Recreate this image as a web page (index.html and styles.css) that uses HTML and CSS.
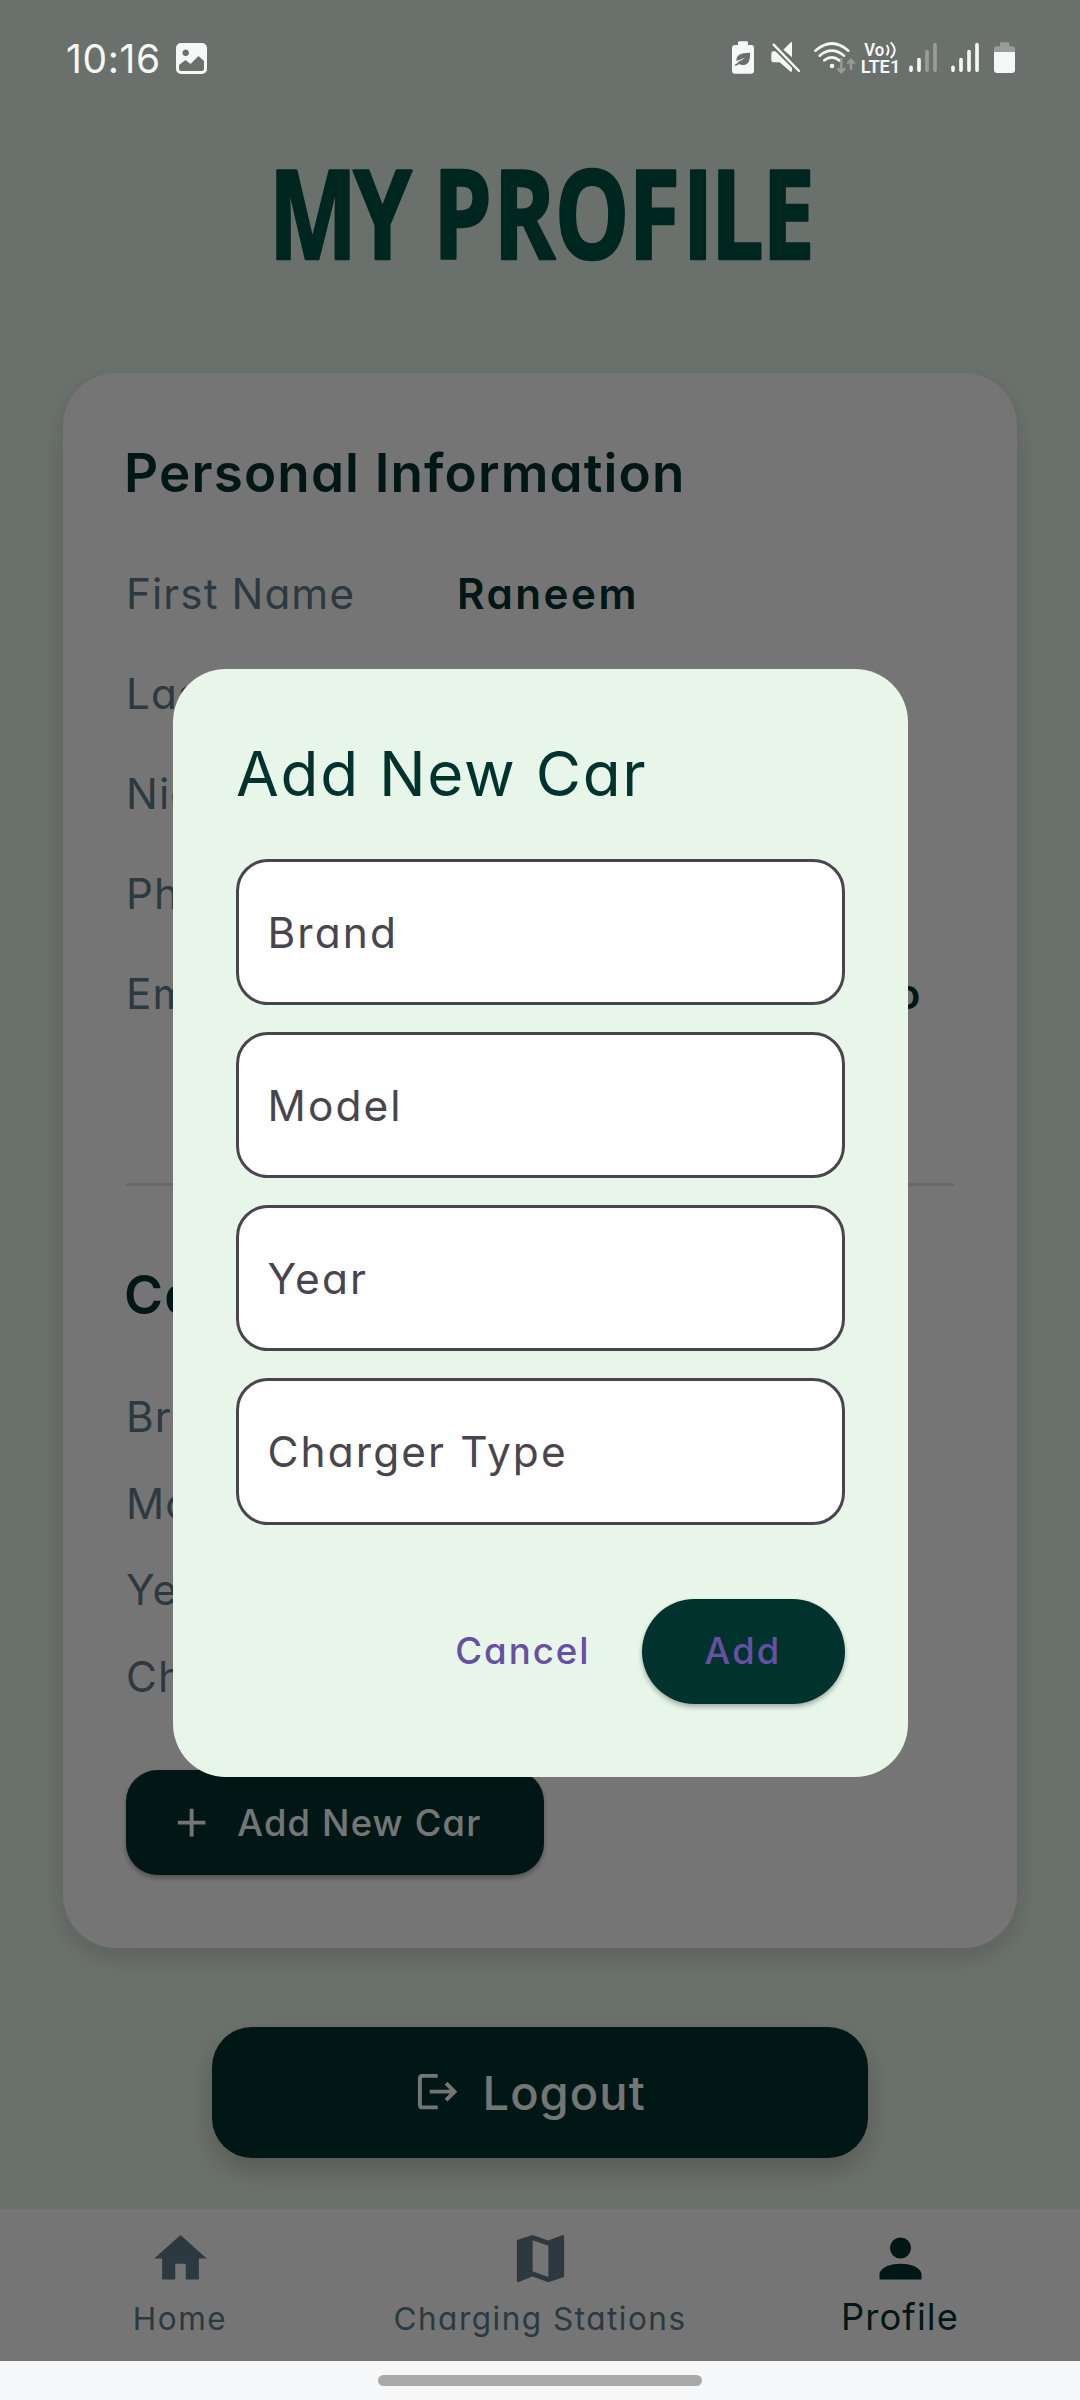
FILE: index.html
```html
<!DOCTYPE html>
<html lang="en">
<head>
<meta charset="utf-8">
<title>My Profile</title>
<link rel="stylesheet" href="styles.css">
</head>
<body>
<div class="screen">
  <div class="app">
    <header class="page-header">
      <svg class="page-title" width="1080" height="150" viewBox="0 0 1080 150">
        <text class="page-title-text" transform="scale(.76 1)" y="109" x="412 503.500 540 608.500 690 779 861 918.500 970 1037.500">MY PROFILE</text>
      </svg>
    </header>

    <main class="card">
      <h2 class="section-title">Personal Information</h2>
      <div class="info-row"><span class="label">First Name</span><span class="value">Raneem</span></div>
      <div class="info-row"><span class="label">Last Name</span></div>
      <div class="info-row"><span class="label">Nickname</span></div>
      <div class="info-row"><span class="label">Phone</span></div>
      <div class="info-row"><span class="label">Email</span><span class="value value-end">raneem@gmail.co</span></div>
      <hr class="divider">
      <h2 class="section-title">Car Information</h2>
      <div class="car-rows">
        <div class="car-row label">Brand</div>
        <div class="car-row label">Model</div>
        <div class="car-row label">Year</div>
        <div class="car-row label">Charger</div>
      </div>
      <button class="btn btn-add-car">
        <svg width="47.25" height="47.25" viewBox="0 0 24 24"><path fill="#fff" d="M19 13h-6v6h-2v-6H5v-2h6V5h2v6h6z"/></svg>
        Add New Car
      </button>
    </main>

    <button class="btn btn-logout">
      <svg width="47.25" height="47.25" viewBox="0 0 24 24"><path fill="#fff" d="M17 7l-1.41 1.41L18.17 11H8v2h10.17l-2.58 2.58L17 17l5-5zM4 5h8V3H4c-1.1 0-2 .9-2 2v14c0 1.1.9 2 2 2h8v-2H4z"/></svg>
      Logout
    </button>

    <nav class="tabs">
      <div class="tab">
        <svg width="63" height="63" viewBox="0 0 24 24"><path fill="currentColor" d="M10 20v-6h4v6h5v-8h3L12 3 2 12h3v8z"/></svg>
        <span>Home</span>
      </div>
      <div class="tab">
        <svg width="63" height="63" viewBox="0 0 24 24"><path fill="currentColor" fill-rule="evenodd" d="M20.5 3l-.16.03L15 5.1 9 3 3.36 4.9a.5.5 0 0 0-.36.48V20.5a.5.5 0 0 0 .66.47L9 18.9l6 2.1 5.64-1.9a.5.5 0 0 0 .36-.48V3.5a.5.5 0 0 0-.5-.5zM15 19l-6-2.11V5l6 2.11z"/></svg>
        <span>Charging Stations</span>
      </div>
      <div class="tab tab-active">
        <svg width="63" height="63" viewBox="0 0 24 24"><circle cx="12" cy="8" r="4" fill="currentColor"/><path fill="currentColor" d="M4 20v-2c0-2.21 3.58-4 8-4s8 1.79 8 4v2z"/></svg>
        <span>Profile</span>
      </div>
    </nav>
  </div>

  <div class="scrim"></div>

  <div class="status-bar">
    <div class="status-left">
      <span class="clock">10:16</span>
      <svg width="31" height="31" viewBox="0 0 31 31"><path fill="#f5f8f6" fill-rule="evenodd" d="M5 0h21a5 5 0 0 1 5 5v21a5 5 0 0 1-5 5H5a5 5 0 0 1-5-5V5a5 5 0 0 1 5-5zM9.700 6.500a3.300 3.300 0 1 0 .01 0zM3 22v3.500A2.500 2.500 0 0 0 5.500 28h20a2.500 2.500 0 0 0 2.500-2.500V18l-5.500-5-8 8-5-4z"/></svg>
    </div>
    <svg class="status-icons" width="380" height="80" viewBox="0 0 1140 240">
      <path fill="#f5f8f6" d="M118 64h22q4 0 4 4v7h9q9 0 9 9v68q0 9-9 9h-48q-9 0-9-9V84q0-9 9-9h9v-7q0-4 4-4z"/>
      <path fill="#6a706b" d="M150 98c1 22-4 37-21 37-5 0-8-1-11-3l-11 6-3-4c6-2 10-6 13-10 6-2 12-5 17-11-9 5-17 7-25 9 0-16 10-24 41-24z"/>
      <g fill="#f5f8f6">
        <path d="M276 68v44l-26-23 20-20q6-5 6-1zM214 100q0-6 6-6h14l42 42v16q0 6-6 2l-31-27h-19q-6 0-6-6z"/>
      </g>
      <path d="M218 74l80 80" stroke="#6a706b" stroke-width="16"/>
      <path d="M221 74l76 79" stroke="#f5f8f6" stroke-width="7" stroke-linecap="round"/>
      <g fill="none" stroke="#f5f8f6" stroke-width="8" stroke-linecap="round">
        <path d="M346 92q50-43 99 0M359 107q36-30 73 0M373 121q22-18 45 0"/>
      </g>
      <circle cx="396" cy="138" r="7" fill="#f5f8f6"/>
      <path d="M424 114v42M413 145l11 12 11-12M453 149v-29M442 131l11-12 11 12" fill="none" stroke="#989d99" stroke-width="7"/>
      <g fill="#f5f8f6" class="volte">
        <text x="493" y="107" font-size="54" textLength="60" lengthAdjust="spacingAndGlyphs">Vo</text>
        <text x="482" y="159" font-size="54" textLength="119" lengthAdjust="spacingAndGlyphs">LTE1</text>
      </g>
      <path d="M560 75q11 15 0 31M572 67q24 24 0 47" fill="none" stroke="#f5f8f6" stroke-width="6"/>
      <g stroke-width="11" stroke-linecap="round" stroke="#f5f8f6">
        <path d="M633 142v9M657 119v32M759 142v9M783 119v32M807 95v56M831 74v77"/>
        <path stroke="#989d99" d="M681 95v56M705 74v77"/>
      </g>
      <path fill="#989d99" d="M904 67h20q4 0 4 4v8h10q7 0 7 7v10h-63V86q0-7 7-7h11v-8q0-4 4-4z"/>
      <path fill="#f5f8f6" d="M882 96h63v54q0 9-9 9h-45q-9 0-9-9z"/>
    </svg>
  </div>

  <section class="dialog">
    <h1 class="dialog-title">Add New Car</h1>
    <div class="fields">
      <div class="field">Brand</div>
      <div class="field">Model</div>
      <div class="field">Year</div>
      <div class="field">Charger Type</div>
    </div>
    <div class="actions">
      <span class="action-cancel">Cancel</span>
      <button class="btn action-add">Add</button>
    </div>
  </section>

  <div class="system-bar"><div class="handle"></div></div>
</div>
</body>
</html>
```
FILE: styles.css
```css
* { box-sizing: border-box; }
body { margin: 0; }

.screen {
  position: relative;
  width: 1080px;
  height: 2400px;
  overflow: hidden;
  display: flex;
  flex-direction: column;
  background: #e8f5e9;
  font-family: Inter, "Open Sans", sans-serif;
  font-feature-settings: "cv11";
  white-space: nowrap;
}
.screen svg { display: block; flex: none; }

.app { height: 2361px; display: flex; flex-direction: column; align-items: center; }

.page-header { height: 373px; padding-top: 150px; }
.page-title-text {
  font: 700 123.5px "Open Sans", sans-serif;
  text-anchor: middle;
  fill: #005346;
  stroke: #005346;
  stroke-width: 2.5px;
  stroke-linejoin: round;
}

.card {
  width: 954px;
  height: 1574.5px;
  padding: 60px 63px 0;
  border-radius: 53px;
  background: #fff;
  box-shadow: 0 10px 26px rgba(0, 0, 0, .14);
}
.section-title {
  margin: 0;
  height: 80px;
  line-height: 80px;
  font-size: 53px;
  font-weight: 560;
  letter-spacing: 1.15px;
  color: #00332e;
  margin-left: -2px;
}
.section-title + .info-row { margin-top: 30px; }
.info-row { display: flex; align-items: center; height: 100px; }
.label { font-size: 42.2px; letter-spacing: 1.1px; color: #607d8b; }
.info-row .label { width: 331px; }
.value { font-size: 42.2px; font-weight: 560; letter-spacing: 2.5px; color: #00332e; }
.value-end { width: 466px; text-align: right; }
.divider { height: 3px; margin: 140px 0 69px; border: 0; background: #e3e3e3; }
.car-rows { margin-top: 39px; }
.car-row { height: 86.6px; line-height: 86.6px; }

.btn {
  display: flex;
  align-items: center;
  padding: 0;
  border: 0;
  font: 500 36.3px Inter, "Open Sans", sans-serif;
  font-feature-settings: "cv11";
  color: #fff;
  background: #00332e;
  box-shadow: 0 3px 5px rgba(0, 0, 0, .3);
}
.btn-add-car {
  width: 417.5px;
  height: 105px;
  margin-top: 50px;
  padding-left: 42px;
  gap: 22px;
  border-radius: 31.5px;
  letter-spacing: 1.2px;
}
.btn-logout {
  width: 656px;
  height: 131px;
  margin-top: 79px;
  padding-right: 20px;
  justify-content: center;
  gap: 21px;
  border-radius: 40px;
  font-size: 47px;
  letter-spacing: 1.1px;
  box-shadow: 0 12px 28px rgba(0, 0, 0, .2);
}

.tabs {
  width: 100%;
  height: 152px;
  margin-top: auto;
  padding-top: 18px;
  display: grid;
  grid-template-columns: repeat(3, 1fr);
  background: #fff;
  color: #607d8b;
  font-size: 31.5px;
  line-height: 50px;
  letter-spacing: 1.5px;
}
.tab { display: flex; flex-direction: column; align-items: center; gap: 4px; }
.tab-active { color: #00332e; font-size: 36.3px; letter-spacing: 1.1px; gap: 2px; }

.scrim { position: absolute; inset: 0; background: rgba(0, 0, 0, .54); }

.status-bar {
  position: absolute;
  inset: 0 0 auto 0;
  height: 116px;
  display: flex;
  justify-content: space-between;
}
.status-left { display: flex; align-items: center; gap: 15px; padding-left: 66px; }
.clock { font-size: 39px; letter-spacing: .6px; color: #f5f8f6; }
.status-icons { margin-top: 20px; }
.volte { font-family: Roboto, sans-serif; font-weight: 600; }

.dialog {
  position: absolute;
  left: 173px;
  top: 669.3px;
  width: 734.5px;
  height: 1108px;
  padding: 60px 63px 0;
  border-radius: 53px;
  background: #e8f5e9;
}
.dialog-title {
  margin: 0;
  height: 90px;
  line-height: 90px;
  font-size: 62px;
  font-weight: 400;
  letter-spacing: 1.7px;
  color: #00332e;
}
.fields { display: grid; gap: 26.8px; margin-top: 39.7px; }
.field {
  height: 146.3px;
  padding-left: 28.5px;
  display: flex;
  align-items: center;
  border: 3px solid #49454f;
  border-radius: 32px;
  background: #fff;
  font-size: 42.4px;
  letter-spacing: 2.1px;
  color: #49454f;
}
.actions { display: flex; justify-content: flex-end; align-items: center; gap: 51px; margin-top: 74px; }
.action-cancel { font-size: 36.6px; font-weight: 500; letter-spacing: 2px; color: #6750a4; }
.action-add {
  width: 203px;
  height: 105px;
  justify-content: center;
  border-radius: 52.5px;
  letter-spacing: 2.2px;
  color: #6750a4;
}

.system-bar {
  position: relative;
  height: 39px;
  padding-top: 14px;
  background: #f6f7f9;
}
.handle { width: 324px; height: 11px; margin: 0 auto; border-radius: 6px; background: #a9a9a9; }
```
